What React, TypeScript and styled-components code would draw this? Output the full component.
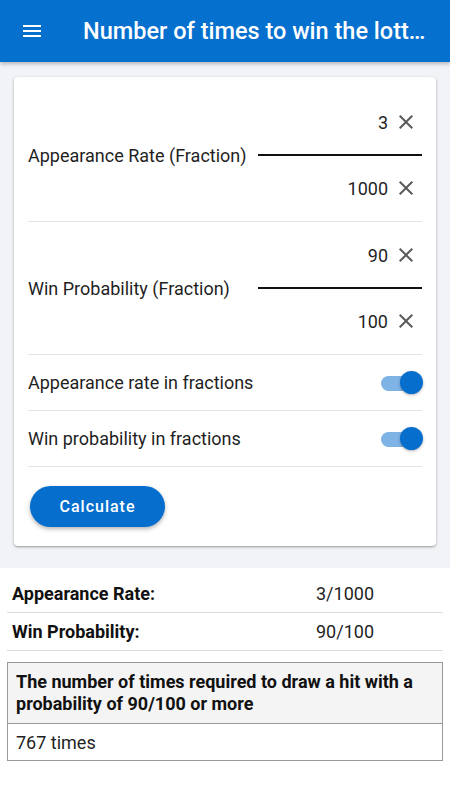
import React from 'react';
import styled, { createGlobalStyle } from 'styled-components';

const GlobalStyle = createGlobalStyle`
  * { box-sizing: border-box; }
  html, body { margin: 0; padding: 0; background: #fff; }
  body {
    font-family: Roboto, "Noto Sans", "Liberation Sans", sans-serif;
    color: #1f1f1f;
  }
`;

function CloseIcon() {
  return (
    <svg width="24" height="24" viewBox="0 0 24 24">
      <path
        d="M19 6.41 17.59 5 12 10.59 6.41 5 5 6.41 10.59 12 5 17.59 6.41 19 12 13.41 17.59 19 19 17.59 13.41 12z"
        fill="#5a5a5a"
      />
    </svg>
  );
}

function MenuIcon() {
  return (
    <svg width="24" height="24" viewBox="0 0 24 24">
      <path d="M3 18h18v-2H3v2zm0-5h18v-2H3v2zm0-7v2h18V6H3z" fill="#fff" />
    </svg>
  );
}

interface FractionProps {
  label: string;
  numerator: string;
  denominator: string;
}

function FractionRow({ label, numerator, denominator }: FractionProps) {
  return (
    <FracRow>
      <FracLabel>{label}</FracLabel>
      <FracInputs>
        <NumberField>
          <NumberText>{numerator}</NumberText>
          <ClearButton>
            <CloseIcon />
          </ClearButton>
        </NumberField>
        <FracLine />
        <NumberField>
          <NumberText>{denominator}</NumberText>
          <ClearButton>
            <CloseIcon />
          </ClearButton>
        </NumberField>
      </FracInputs>
    </FracRow>
  );
}

function ToggleRow({ label }: { label: string }) {
  return (
    <SwitchRow>
      <SwitchLabel>{label}</SwitchLabel>
      <Switch>
        <SwitchTrack />
        <SwitchThumb />
      </Switch>
    </SwitchRow>
  );
}

export default function App() {
  return (
    <>
      <GlobalStyle />
      <Page>
        <AppBar>
          <MenuButton>
            <MenuIcon />
          </MenuButton>
          <Title>Number of times to win the lottery</Title>
        </AppBar>
        <FormArea>
          <Card>
            <FractionRow
              label="Appearance Rate (Fraction)"
              numerator="3"
              denominator="1000"
            />
            <FractionRow
              label="Win Probability (Fraction)"
              numerator="90"
              denominator="100"
            />
            <ToggleRow label="Appearance rate in fractions" />
            <ToggleRow label="Win probability in fractions" />
            <ButtonArea>
              <CalcButton>Calculate</CalcButton>
            </ButtonArea>
          </Card>
        </FormArea>
        <Results>
          <ResultRow>
            <ResultLabel>Appearance Rate:</ResultLabel>
            <ResultValue>3/1000</ResultValue>
          </ResultRow>
          <ResultRow>
            <ResultLabel>Win Probability:</ResultLabel>
            <ResultValue>90/100</ResultValue>
          </ResultRow>
          <AnswerTable>
            <AnswerHead>
              The number of times required to draw a hit with a probability of
              90/100 or more
            </AnswerHead>
            <AnswerCell>767 times</AnswerCell>
          </AnswerTable>
        </Results>
      </Page>
    </>
  );
}

const Page = styled.div`
  width: 450px;
  min-height: 800px;
  background: #fff;
`;

const AppBar = styled.header`
  height: 62px;
  background: #0670cf;
  display: flex;
  align-items: center;
  padding: 0 22px 0 20px;
  gap: 39px;
  box-shadow: 0 2px 4px rgba(0, 0, 0, 0.25);
  position: relative;
  z-index: 1;
`;

const MenuButton = styled.div`
  width: 24px;
  height: 24px;
  display: flex;
  flex: none;
`;

const Title = styled.h1`
  margin: 0;
  color: #fff;
  font-size: 23.5px;
  font-weight: 500;
  white-space: nowrap;
  overflow: hidden;
  text-overflow: ellipsis;
`;

const FormArea = styled.div`
  background: #f2f3f7;
  padding: 15px 14px 22px;
`;

const Card = styled.div`
  background: #fff;
  border-radius: 4px;
  box-shadow: 0 1px 3px rgba(0, 0, 0, 0.3), 0 1px 1px rgba(0, 0, 0, 0.1);
  padding: 12px 14px 19px;
`;

const FracRow = styled.div`
  display: flex;
  align-items: center;
  justify-content: space-between;
  padding: 11px 0;
  border-bottom: 1px solid #e4e4e4;
`;

const FracLabel = styled.span`
  font-size: 18px;
  color: #1f1f1f;
`;

const FracInputs = styled.div`
  width: 164px;
  display: flex;
  flex-direction: column;
  gap: 10px;
`;

const NumberField = styled.div`
  height: 44px;
  display: flex;
  align-items: center;
  justify-content: flex-end;
  gap: 6px;
  padding-right: 4px;
`;

const NumberText = styled.span`
  font-size: 18px;
  color: #1f1f1f;
`;

const ClearButton = styled.span`
  display: flex;
  width: 24px;
  height: 24px;
`;

const FracLine = styled.div`
  height: 2px;
  background: #111;
`;

const SwitchRow = styled.div`
  height: 56px;
  display: flex;
  align-items: center;
  justify-content: space-between;
  border-bottom: 1px solid #e4e4e4;
`;

const SwitchLabel = styled.span`
  font-size: 18px;
  color: #1f1f1f;
`;

const Switch = styled.div`
  position: relative;
  width: 42px;
  height: 24px;
  margin-right: -1px;
`;

const SwitchTrack = styled.div`
  position: absolute;
  left: 0;
  right: 3px;
  top: 5px;
  height: 15px;
  border-radius: 8px;
  background: #7eb3e6;
`;

const SwitchThumb = styled.div`
  position: absolute;
  right: 0;
  top: 0;
  width: 23px;
  height: 23px;
  border-radius: 50%;
  background: #066fce;
  box-shadow: 0 1px 3px rgba(0, 0, 0, 0.3);
`;

const ButtonArea = styled.div`
  padding-top: 19px;
  padding-left: 2px;
`;

const CalcButton = styled.button`
  width: 135px;
  height: 41px;
  border: none;
  border-radius: 21px;
  background: #066fce;
  color: #fff;
  font-family: Roboto, "Liberation Sans", sans-serif;
  font-size: 16px;
  font-weight: 500;
  letter-spacing: 1px;
  box-shadow: 0 2px 4px rgba(0, 0, 0, 0.3);
  cursor: pointer;
`;

const Results = styled.div`
  padding: 7px 7px 0;
`;

const ResultRow = styled.div`
  display: grid;
  grid-template-columns: 309px 1fr;
  height: 38px;
  align-items: center;
  border-bottom: 1px solid #dcdcdc;
  font-size: 18px;
`;

const ResultLabel = styled.span`
  font-weight: 700;
  padding-left: 5px;
  color: #111;
`;

const ResultValue = styled.span`
  color: #1f1f1f;
`;

const AnswerTable = styled.div`
  margin-top: 11px;
  border: 1px solid #999;
`;

const AnswerHead = styled.div`
  background: #f4f4f4;
  font-weight: 700;
  font-size: 18px;
  line-height: 22px;
  padding: 8px;
  border-bottom: 1px solid #999;
  color: #111;
`;

const AnswerCell = styled.div`
  height: 36px;
  display: flex;
  align-items: center;
  padding-left: 8px;
  font-size: 18px;
  color: #1f1f1f;
`;
